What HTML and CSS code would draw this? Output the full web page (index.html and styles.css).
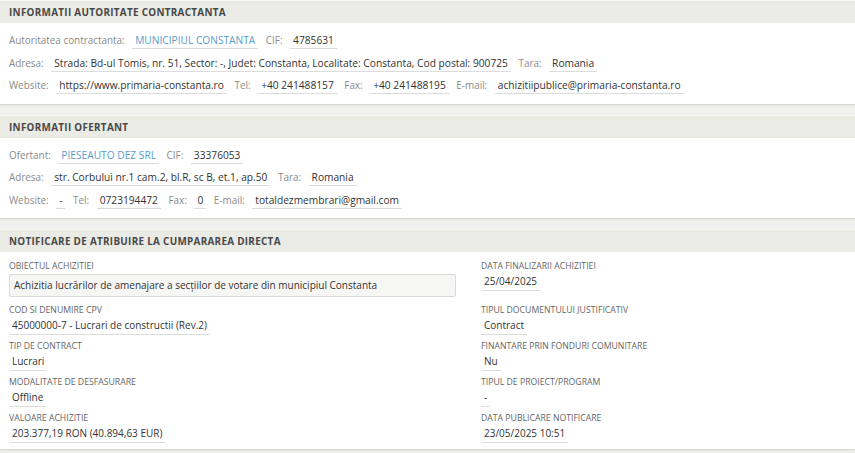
FILE: index.html
```html
<!DOCTYPE html>
<html lang="ro">
<head>
    <meta charset="UTF-8">
    <title>Notificare de atribuire</title>
    <link rel="stylesheet" href="styles.css">
</head>
<body>

<div class="panel">
    <div class="panel-head">INFORMATII AUTORITATE CONTRACTANTA</div>
    <div class="panel-body">
        <div class="line">
            <span class="lbl">Autoritatea contractanta:</span>
            <span class="val link">MUNICIPIUL CONSTANTA</span>
            <span class="lbl">CIF:</span>
            <span class="val">4785631</span>
        </div>
        <div class="line">
            <span class="lbl">Adresa:</span>
            <span class="val">Strada: Bd-ul Tomis, nr. 51, Sector: -, Judet: Constanta, Localitate: Constanta, Cod postal: 900725</span>
            <span class="lbl">Tara:</span>
            <span class="val">Romania</span>
        </div>
        <div class="line">
            <span class="lbl">Website:</span>
            <span class="val">https://www.primaria-constanta.ro</span>
            <span class="lbl">Tel:</span>
            <span class="val">+40 241488157</span>
            <span class="lbl">Fax:</span>
            <span class="val">+40 241488195</span>
            <span class="lbl">E-mail:</span>
            <span class="val">achizitiipublice@primaria-constanta.ro</span>
        </div>
    </div>
</div>

<div class="panel">
    <div class="panel-head">INFORMATII OFERTANT</div>
    <div class="panel-body">
        <div class="line">
            <span class="lbl">Ofertant:</span>
            <span class="val link">PIESEAUTO DEZ SRL</span>
            <span class="lbl">CIF:</span>
            <span class="val">33376053</span>
        </div>
        <div class="line">
            <span class="lbl">Adresa:</span>
            <span class="val">str. Corbului nr.1 cam.2, bl.R, sc B, et.1, ap.50</span>
            <span class="lbl">Tara:</span>
            <span class="val">Romania</span>
        </div>
        <div class="line">
            <span class="lbl">Website:</span>
            <span class="val">-</span>
            <span class="lbl">Tel:</span>
            <span class="val">0723194472</span>
            <span class="lbl">Fax:</span>
            <span class="val">0</span>
            <span class="lbl">E-mail:</span>
            <span class="val">totaldezmembrari@gmail.com</span>
        </div>
    </div>
</div>

<div class="panel">
    <div class="panel-head">NOTIFICARE DE ATRIBUIRE LA CUMPARAREA DIRECTA</div>
    <div class="panel-body fields">
        <div class="field">
            <div class="field-label">Obiectul achizitiei</div>
            <div class="field-box">Achizitia lucrărilor de amenajare a secțiilor de votare din municipiul Constanta</div>
        </div>
        <div class="field">
            <div class="field-label">Data finalizarii achizitiei</div>
            <div class="field-value">25/04/2025</div>
        </div>
        <div class="field">
            <div class="field-label">Cod si denumire CPV</div>
            <div class="field-value">45000000-7 - Lucrari de constructii (Rev.2)</div>
        </div>
        <div class="field">
            <div class="field-label">Tipul documentului justificativ</div>
            <div class="field-value">Contract</div>
        </div>
        <div class="field">
            <div class="field-label">Tip de contract</div>
            <div class="field-value">Lucrari</div>
        </div>
        <div class="field">
            <div class="field-label">Finantare prin fonduri comunitare</div>
            <div class="field-value">Nu</div>
        </div>
        <div class="field">
            <div class="field-label">Modalitate de desfasurare</div>
            <div class="field-value">Offline</div>
        </div>
        <div class="field">
            <div class="field-label">Tipul de proiect/program</div>
            <div class="field-value">-</div>
        </div>
        <div class="field">
            <div class="field-label">Valoare achizitie</div>
            <div class="field-value">203.377,19 RON (40.894,63 EUR)</div>
        </div>
        <div class="field">
            <div class="field-label">Data publicare notificare</div>
            <div class="field-value">23/05/2025 10:51</div>
        </div>
    </div>
</div>

</body>
</html>
```

FILE: styles.css
```css
body {
    font-family: "Open Sans", "DejaVu Sans", sans-serif;
    margin: 0;
    padding: 0;
    background-color: #f1f1f0;
    color: #333;
}
.panel {
    background-color: #fff;
    border-bottom: 1px solid #d8d8d6;
    box-shadow: 0 1px 2px rgba(0, 0, 0, 0.06);
    margin-bottom: 10px;
}
.panel-head {
    background-color: #ebebe6;
    border-top: 1px solid #f6f6f4;
    height: 22px;
    line-height: 22px;
    padding: 0 9px;
    font-size: 9.9px;
    font-weight: bold;
    letter-spacing: 0.3px;
    color: #484848;
}
.panel-body {
    padding: 7px 9px 6px;
}
.line {
    height: 22.5px;
    line-height: 20px;
    font-size: 9.9px;
    white-space: nowrap;
}
.lbl {
    color: #8a8a8a;
    margin-right: 5px;
}
.val {
    display: inline-block;
    line-height: 16px;
    padding: 0 3px;
    border-bottom: 1px solid #dcdcdc;
    margin-right: 5px;
    font-size: 10.2px;
    color: #333;
}
.link {
    color: #5a9ccb;
}
.fields {
    display: grid;
    grid-template-columns: 472px 1fr;
    padding-top: 8px;
    padding-bottom: 1px;
}
.field {
    margin-bottom: 5px;
}
.field-label {
    font-size: 8.7px;
    line-height: 12px;
    color: #666;
    text-transform: uppercase;
}
.field-value {
    width: fit-content;
    margin-top: 1px;
    padding: 1px 3px;
    line-height: 15px;
    font-size: 10px;
    border-bottom: 1px solid #dcdcdc;
}
.field-box {
    width: 437px;
    margin-top: 2px;
    margin-bottom: 2px;
    padding: 0 4px;
    height: 21px;
    line-height: 21px;
    font-size: 10px;
    background-color: #f6f6f5;
    border: 1px solid #dadada;
    border-radius: 2px;
}
```
